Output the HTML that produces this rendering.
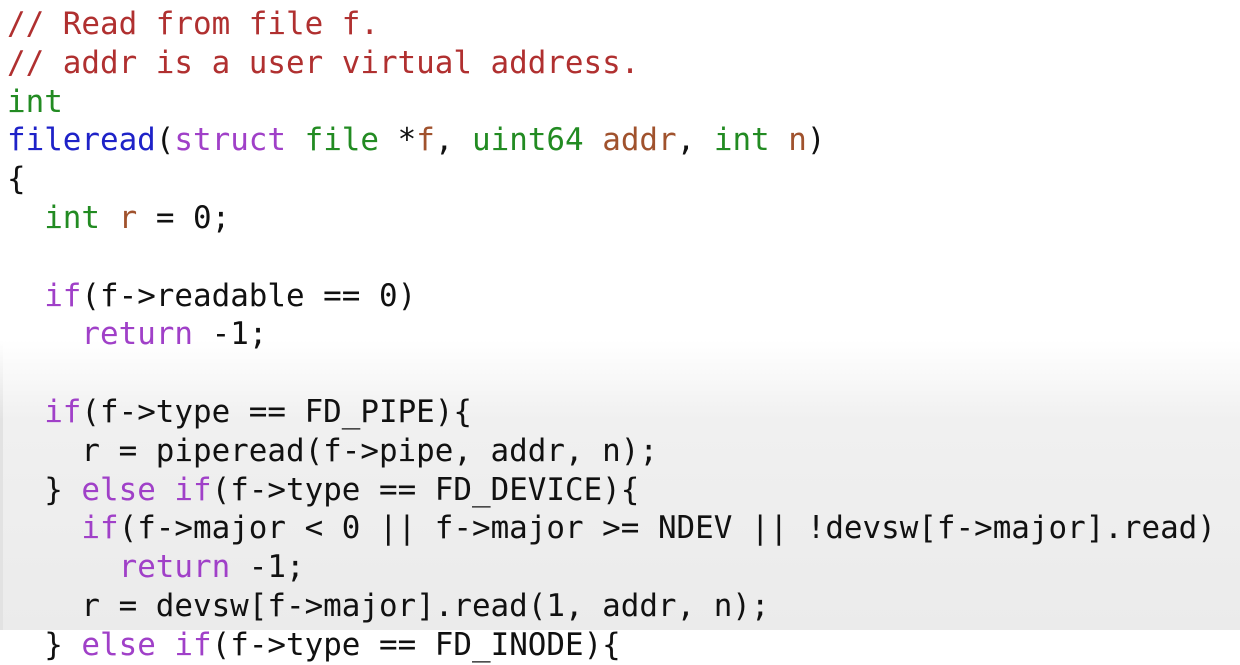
<!DOCTYPE html>
<html><head><style>
html,body{margin:0;padding:0;}
body{width:1240px;height:630px;overflow:hidden;background:linear-gradient(to bottom,#fff 0,#fff 340px,#f0f0f0 420px,#ebebeb 630px);position:relative;}
body:before{content:"";position:absolute;left:0;top:0;width:3px;height:630px;background:linear-gradient(to bottom,#fff 0,#fff 340px,#e2e2e2 420px);}
pre{margin:0;position:absolute;left:7px;top:5px;font-family:"DejaVu Sans Mono","Liberation Mono",monospace;font-size:30.9px;line-height:38.8px;color:#111;}
.c{color:#b03030}.t{color:#228b22}.f{color:#1e22c8}.k{color:#a040c8}.v{color:#a0522d}
</style></head><body><pre><span class="c">// Read from file f.</span>
<span class="c">// addr is a user virtual address.</span>
<span class="t">int</span>
<span class="f">fileread</span>(<span class="k">struct</span> <span class="t">file</span> *<span class="v">f</span>, <span class="t">uint64</span> <span class="v">addr</span>, <span class="t">int</span> <span class="v">n</span>)
{
  <span class="t">int</span> <span class="v">r</span> = 0;

  <span class="k">if</span>(f-&gt;readable == 0)
    <span class="k">return</span> -1;

  <span class="k">if</span>(f-&gt;type == FD_PIPE){
    r = piperead(f-&gt;pipe, addr, n);
  } <span class="k">else</span> <span class="k">if</span>(f-&gt;type == FD_DEVICE){
    <span class="k">if</span>(f-&gt;major &lt; 0 || f-&gt;major &gt;= NDEV || !devsw[f-&gt;major].read)
      <span class="k">return</span> -1;
    r = devsw[f-&gt;major].read(1, addr, n);
  } <span class="k">else</span> <span class="k">if</span>(f-&gt;type == FD_INODE){
</pre></body></html>
